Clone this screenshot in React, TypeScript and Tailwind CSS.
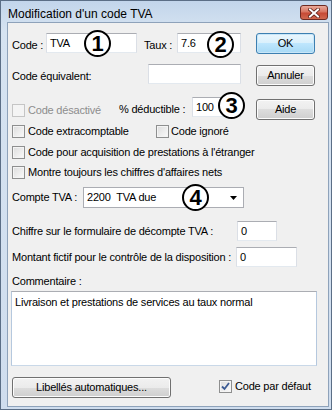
import React from "react";

const btn =
	"flex items-center justify-center rounded-[3px] border border-[#707070] bg-[linear-gradient(#f2f2f2_0%,#ebebeb_50%,#dddddd_50%,#cfcfcf_100%)] shadow-[inset_0_0_0_1px_#fcfcfc] text-black";
const okBtn =
	"flex items-center justify-center rounded-[3px] border border-[#3c7fb1] bg-[linear-gradient(#eaf6fd_0%,#d9f0fc_50%,#bee6fd_50%,#a7d9f5_100%)] shadow-[inset_0_0_0_1px_#c8e6f8] text-black";
const field =
	"flex h-[20px] items-center border border-[#abadb3] border-b-[#e3e9ef] border-x-[#dbdfe6] bg-white pl-[3px] text-black";

const Check = ({ checked = false, disabled = false }: { checked?: boolean; disabled?: boolean }) => (
	<span
		className={
			disabled
				? "flex h-[13px] w-[13px] shrink-0 items-center justify-center border border-[#c5c5c5] bg-[#f4f4f4]"
				: "flex h-[13px] w-[13px] shrink-0 items-center justify-center border border-[#8e8f8f] bg-[linear-gradient(135deg,#dcdcdc,#fbfbfb)] shadow-[inset_0_0_0_1px_#f4f4f4]"
		}>
		{checked && (
			<svg width="9" height="9" viewBox="0 0 9 9">
				<path d="M1 4.5 L3.5 7 L8 1" fill="none" stroke="#3b5a93" strokeWidth="1.8" />
			</svg>
		)}
	</span>
);

const Circle = ({ n, className }: { n: number; className: string }) => (
	<div
		className={
			"absolute flex h-[27px] w-[27px] items-center justify-center rounded-full border-2 border-black bg-white font-['Liberation_Sans',Arial,sans-serif] text-[22px] leading-none font-bold text-black " +
			className
		}>
		{n}
	</div>
);

export default function App() {
	return (
		<div className="flex h-[410px] w-[332px] flex-col border border-[#5b6e86] bg-[linear-gradient(#c2d5eb,#d6e3f1_30px,#cfddee)] font-['Liberation_Sans',Arial,sans-serif] text-[11px] tracking-[-0.2px] text-black">
			{/* title bar */}
			<div className="flex h-[21px] shrink-0 items-start justify-between">
				<span className="mt-[4px] pl-[7px] text-[12px] tracking-normal">Modification d'un code TVA</span>
				<div className="mt-[4px] mr-[3px] flex h-[15px] w-[28px] items-center justify-center rounded-[3px] border border-[#6d2a22] bg-[linear-gradient(#e9a99b_0%,#d87561_45%,#c74a36_55%,#d0684f_100%)]">
					<svg width="12" height="10" viewBox="0 0 12 10">
						<path d="M2 1.5 L10 8.5 M10 1.5 L2 8.5" stroke="#5a1e16" strokeWidth="3.6" strokeLinecap="square" />
						<path d="M2 1.5 L10 8.5 M10 1.5 L2 8.5" stroke="#ffffff" strokeWidth="2" strokeLinecap="square" />
					</svg>
				</div>
			</div>

			{/* client area */}
			<div className="relative mr-[2px] mb-[2px] ml-[6px] flex flex-1 flex-col border border-[#8ea2ba] bg-[#f0f0f0] pl-[4px]">
				{/* row 1 */}
				<div className="mt-[10px] flex h-[21px] items-start">
					<span className="mt-[4px] w-[34px]">Code :</span>
					<div className={field + " w-[91px]"}>TVA</div>
					<span className="mt-[4px] ml-[7px] w-[33px]">Taux :</span>
					<div className={field + " w-[64px]"}>7.6</div>
					<div className={okBtn + " ml-[15px] h-[21px] w-[59px]"}>OK</div>
				</div>

				{/* row 2 */}
				<div className="mt-[10px] flex h-[22px] items-start">
					<span className="mt-[4px] w-[136px]">Code équivalent:</span>
					<div className={field + " w-[93px]"}></div>
					<div className={btn + " mt-[1px] ml-[15px] h-[21px] w-[59px]"}>Annuler</div>
				</div>

				{/* row 3 */}
				<div className="mt-[11px] flex h-[23px] items-start">
					<div className="mt-[5px] flex w-[107px] items-center gap-[3px] text-[#8d8d8d]">
						<Check disabled />
						<span>Code désactivé</span>
					</div>
					<span className="mt-[4px] w-[73px]">% déductible :</span>
					<div className={field + " w-[49px]"}>100</div>
					<div className={btn + " mt-[2px] ml-[15px] h-[21px] w-[59px]"}>Aide</div>
				</div>

				{/* checkboxes */}
				<div className="mt-[5px] flex h-[13px] items-center">
					<div className="flex w-[144px] items-center gap-[3px]">
						<Check />
						<span>Code extracomptable</span>
					</div>
					<div className="flex items-center gap-[2px]">
						<Check />
						<span>Code ignoré</span>
					</div>
				</div>
				<div className="mt-[8px] flex h-[13px] items-center gap-[3px]">
					<Check />
					<span>Code pour acquisition de prestations à l'étranger</span>
				</div>
				<div className="mt-[7px] flex h-[13px] items-center gap-[3px]">
					<Check />
					<span>Montre toujours les chiffres d'affaires nets</span>
				</div>

				{/* compte */}
				<div className="mt-[8px] flex h-[21px] items-center">
					<span className="w-[71px]">Compte TVA :</span>
					<div className="flex h-[21px] w-[161px] items-center justify-between border border-[#abadb3] bg-white pr-[6px] pl-[3px]">
						<span>2200&nbsp; TVA due</span>
						<svg width="7" height="4" viewBox="0 0 7 4">
							<path d="M0 0 H7 L3.5 4 Z" fill="#000" />
						</svg>
					</div>
				</div>

				<div className="mt-[13px] flex h-[20px] items-center">
					<span className="w-[225px]">Chiffre sur le formulaire de décompte TVA :</span>
					<div className={field + " w-[40px]"}>0</div>
				</div>

				<div className="mt-[6px] flex h-[20px] items-center">
					<span className="w-[224px]">Montant fictif pour le contrôle de la disposition :</span>
					<div className={field + " w-[61px] items-start pt-[1px]"}>0</div>
				</div>

				<div className="mt-[8px] h-[13px] leading-[13px]">Commentaire :</div>
				<div className="mt-[3px] -ml-[1px] h-[75px] w-[306px] border border-[#abadb3] border-x-[#b5c8de] border-b-[#c9d8e8] bg-white pt-[2px] pl-[3px]">
					Livraison et prestations de services au taux normal
				</div>

				{/* bottom */}
				<div className="mt-[11px] flex h-[21px] items-start">
					<div className={btn + " h-[21px] w-[159px]"}>Libellés automatiques...</div>
					<div className="mt-[1px] ml-[48px] flex items-center gap-[3px]">
						<Check checked />
						<span>Code par défaut</span>
					</div>
				</div>

				<Circle n={1} className="top-[7px] left-[76px]" />
				<Circle n={2} className="top-[8px] left-[199px]" />
				<Circle n={3} className="top-[69px] left-[210px]" />
				<Circle n={4} className="top-[161px] left-[174px]" />
			</div>
		</div>
	);
}
